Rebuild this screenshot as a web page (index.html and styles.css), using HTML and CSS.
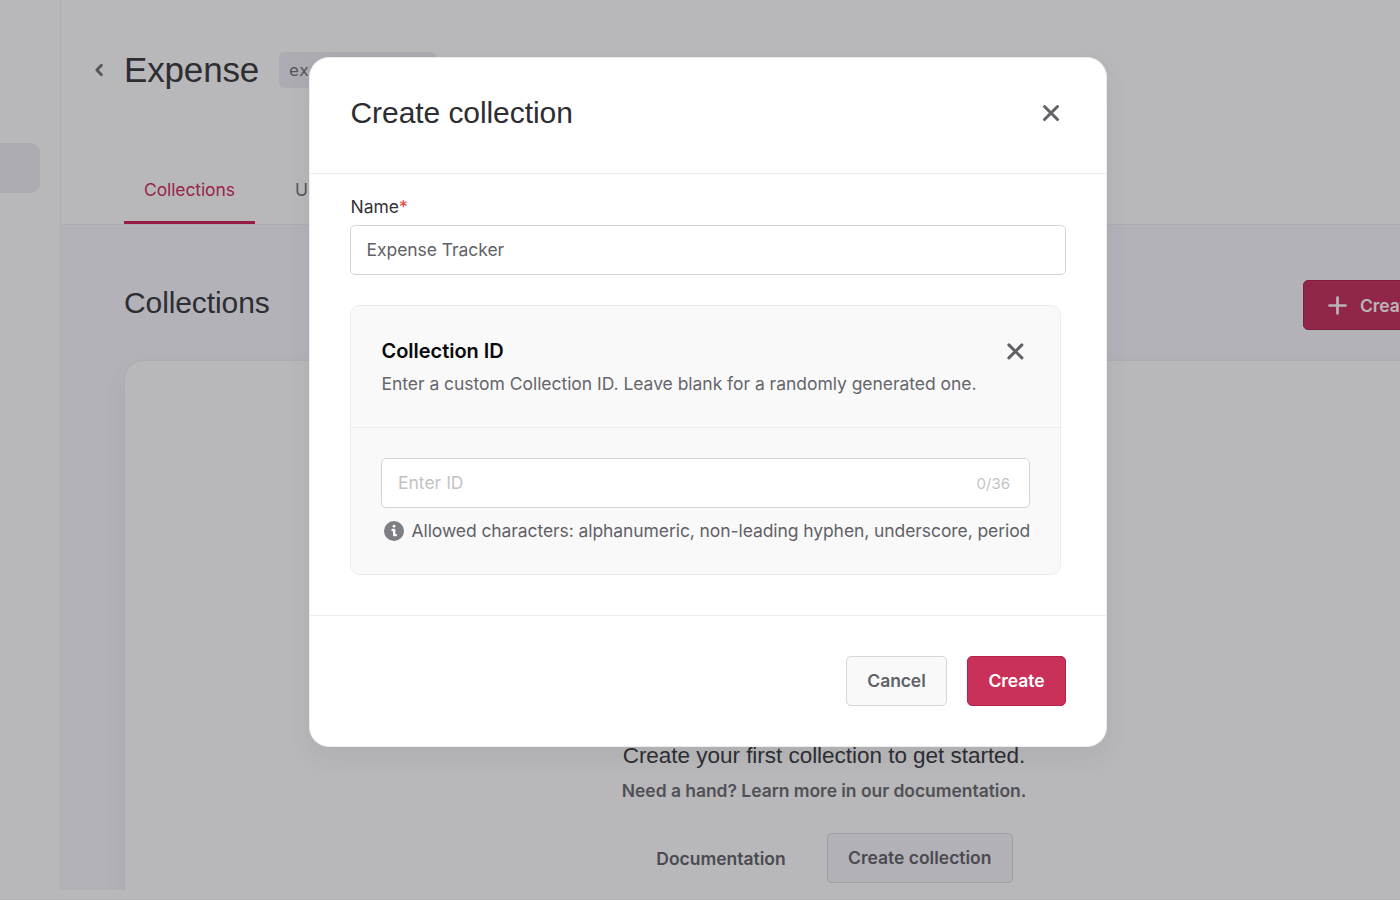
FILE: index.html
```html
<!DOCTYPE html>
<html lang="en">
<head>
<meta charset="utf-8">
<title>Create collection</title>
<link rel="stylesheet" href="styles.css">
</head>
<body>
<div class="app">
  <aside class="sidebar"><div class="sidebar-item"></div></aside>
  <main class="main">
    <header class="header">
      <div class="title-row">
        <svg class="back" width="10" height="14" viewBox="0 0 10 14"><path d="M7.400 2.300 2.800 7l4.600 4.700" fill="none" stroke="#55555b" stroke-width="2.800" stroke-linecap="round" stroke-linejoin="round"/></svg>
        <h1 class="title">Expense</h1>
        <span class="id-tag">expense</span>
      </div>
      <nav class="tabs"><a class="tab tab-active">Collections</a><a class="tab">Usage</a></nav>
    </header>
    <section class="content">
      <div class="content-head">
        <h2 class="subtitle">Collections</h2>
        <button class="btn btn-add"><svg width="20" height="20" viewBox="0 0 20 20"><path d="M10.500 1.500v16M2.500 9.500h16" stroke="#b9b5b9" stroke-width="2.700" stroke-linecap="round"/></svg><span>Create collection</span></button>
      </div>
      <div class="card">
        <p class="empty-title">Create your first collection to get started.</p>
        <p class="empty-text">Need a hand? Learn more in our documentation.</p>
        <div class="empty-actions"><a class="doc-link">Documentation</a><button class="btn btn-dim">Create collection</button></div>
      </div>
    </section>
  </main>
</div>
<div class="overlay">
  <div class="modal">
    <div class="modal-head">
      <h3 class="modal-title">Create collection</h3>
      <svg class="close" width="20" height="20" viewBox="0 0 20 20"><path d="M3.500 3.500l13 13M16.500 3.500l-13 13" stroke="#616166" stroke-width="3" stroke-linecap="round"/></svg>
    </div>
    <div class="modal-body">
      <label class="label">Name<span class="required">*</span></label>
      <div class="input input-name"><span>Expense Tracker</span></div>
      <div class="panel">
        <div class="panel-head">
          <div>
            <h4 class="panel-title">Collection ID</h4>
            <p class="panel-text">Enter a custom Collection ID. Leave blank for a randomly generated one.</p>
          </div>
          <svg class="panel-close" width="20" height="20" viewBox="0 0 20 20"><path d="M3.900 3.900l13 13M16.900 3.900l-13 13" stroke="#616166" stroke-width="3" stroke-linecap="round"/></svg>
        </div>
        <div class="panel-body">
          <div class="input input-id"><span>Enter ID</span><span class="count">0/36</span></div>
          <div class="hint">
            <svg width="20" height="20" viewBox="0 0 20 20"><circle cx="10" cy="10" r="10" fill="#7e7e84"/><circle cx="10" cy="5.200" r="1.400" fill="#fff"/><path d="M8.500 9h1.700v5.200h1.700" fill="none" stroke="#fff" stroke-width="2.300" stroke-linecap="round" stroke-linejoin="round"/></svg>
            <span class="hint-text">Allowed characters: alphanumeric, non-leading hyphen, underscore, period</span>
          </div>
        </div>
      </div>
    </div>
    <div class="modal-foot"><button class="btn btn-cancel">Cancel</button><button class="btn btn-create">Create</button></div>
  </div>
</div>
</body>
</html>
```
FILE: styles.css
```css
* { box-sizing: border-box; }
body { margin: 0; width: 1400px; height: 900px; overflow: hidden; background: #b8b8ba; font-family: Inter, sans-serif; font-size: 17.5px; color: #55555b; }
h1, h2, h3, h4, p { margin: 0; font-weight: 400; }
h1, h2, h3, .empty-title { font-family: "Liberation Sans", Arial, sans-serif; color: #2d2d32; white-space: nowrap; }
.btn { font: 600 17.5px/22px Inter, sans-serif; letter-spacing: -.08px; height: 50px; border: 1px solid; border-radius: 5px; padding: 0; white-space: nowrap; }

.app { display: flex; height: 890px; width: 1400px; overflow: hidden; }
.sidebar { width: 61px; flex: none; border-right: 1px solid #aeadb4; padding-top: 143px; }
.sidebar-item { width: 40px; height: 50px; background: #adacb3; border-radius: 0 10px 10px 0; }
.main { width: 1339px; display: flex; flex-direction: column; }
.header { height: 225px; border-bottom: 1px solid #adacb3; padding: 50px 0 0 33px; flex: none; }
.title-row { display: flex; align-items: center; height: 40px; }
.back { margin-right: 20px; flex: none; }
.title { font-size: 35px; line-height: 40px; width: 155px; letter-spacing: -.15px; }
.id-tag { width: 157px; height: 36px; margin-top: -1px; padding: 0 10px; background: #adacb3; border-radius: 5px; font: 16px/37px "DejaVu Sans", sans-serif; letter-spacing: .8px; white-space: nowrap; }
.tabs { display: flex; padding: 65px 0 0 30px; }
.tab { width: 131px; height: 69px; padding: 23px 0 0 20px; line-height: 24px; margin-right: 20px; letter-spacing: -.1px; }
.tab-active { color: #98254b; border-bottom: 3px solid #981b46; }
.content { flex: 1; background: #b3b2b8; padding: 55px 0 0 63px; }
.content-head { display: flex; justify-content: space-between; height: 80px; width: 1399px; }
.subtitle { font-size: 30px; line-height: 46px; letter-spacing: -.1px; }
.btn-add { width: 220px; display: flex; align-items: center; gap: 13px; padding: 1px 0 0 23px; background: #912748; border-color: #821c3c; color: #b9b5b9; }
.card { height: 560px; width: 1400px; border: 1px solid #adadb2; border-radius: 20px 0 0 0; background: #b8b8ba; box-shadow: -4px 10px 20px rgba(80,80,80,.06); padding-top: 381px; }
.empty-title { font-size: 22.5px; line-height: 28px; text-align: center; letter-spacing: -.03px; }
.empty-text { font-weight: 600; line-height: 24px; text-align: center; margin-top: 9px; color: #505056; letter-spacing: -.04px; }
.empty-actions { display: flex; justify-content: center; align-items: center; padding-left: 21px; gap: 41px; margin-top: 30px; }
.doc-link { font-weight: 600; color: #4a4a50; letter-spacing: 0; }
.btn-dim { width: 186px; background: #b2b1b7; border-color: #9d9da2; color: #4a4a50; letter-spacing: 0; }

.overlay { position: absolute; left: 0; top: 0; width: 1400px; height: 900px; padding: 57px 0 0 309px; border-bottom: 1px solid #aeaeb1; }
.modal { width: 798px; height: 690px; background: #fff; border: 1px solid #ececee; border-radius: 20px; box-shadow: 0 10px 26px rgba(60,60,60,.07); display: flex; flex-direction: column; }
.modal-head { height: 116px; border-bottom: 1px solid #ececee; display: flex; justify-content: space-between; padding: 35px 45px 0 40.500px; flex: none; }
.modal-title { font-size: 30px; line-height: 40px; letter-spacing: -.07px; }
.close { margin-top: 10px; }
.modal-body { padding: 21px 40px 0; flex: 1; }
.label { display: block; line-height: 24px; color: #343439; padding-left: .5px; }
.required { color: #f0453c; }
.input { width: 716px; height: 50px; margin-top: 6px; border: 1px solid #d5d5d8; border-radius: 5px; background: #fff; display: flex; align-items: center; justify-content: space-between; padding: 0 19px 1px 15.500px; color: #616166; }
.input-name { letter-spacing: -.05px; }
.panel { width: 711px; height: 270px; margin-top: 30px; background: #f9f9fa; border: 1px solid #ececee; border-radius: 10px; }
.panel-head { height: 122px; border-bottom: 1px solid #ececee; display: flex; justify-content: space-between; padding: 33px 35px 0 30.500px; }
.panel-title { font-weight: 600; font-size: 20px; line-height: 24px; color: #09090c; white-space: nowrap; letter-spacing: -.03px; }
.panel-text { line-height: 24px; margin-top: 9px; color: #66666b; white-space: nowrap; letter-spacing: -.035px; }
.panel-close { margin-top: 2px; flex: none; }
.panel-body { padding: 30px 30px 0; }
.input-id { width: 649px; margin-top: 0; padding-left: 16px; color: #c3c3c6; }
.count { font-size: 15px; padding-top: 1px; }
.hint { display: flex; gap: 8px; padding: 13px 0 0 2.500px; color: #616166; line-height: 20px; white-space: nowrap; }
.hint svg { flex: none; }
.hint-text { letter-spacing: -.083px; }
.modal-foot { height: 131px; flex: none; border-top: 1px solid #ececee; padding: 40px 40px 0; display: flex; justify-content: flex-end; gap: 20px; }
.btn-cancel { width: 101px; background: #f9f9fa; border-color: #d7d7da; color: #616166; }
.btn-create { width: 99px; background: #c93158; border-color: #b62049; color: #fff; }
```
